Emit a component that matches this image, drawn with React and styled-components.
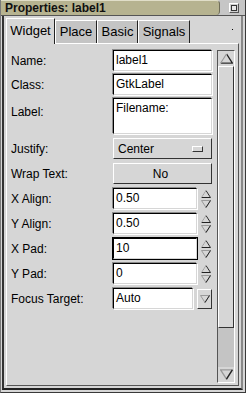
import styled, { createGlobalStyle } from "styled-components";

const Global = createGlobalStyle`
  html, body {
    margin: 0;
    padding: 0;
    background: #d6d6d6;
  }
  body {
    font-family: "Liberation Sans", Arial, sans-serif;
    font-size: 12px;
    color: #000;
  }
`;

const Window = styled.div`
  width: 246px;
  height: 393px;
  box-sizing: border-box;
  background: #d6d6d6;
  border-left: 1px solid #7a7a7a;
  border-right: 1px solid #3a3a3a;
  border-bottom: 1px solid #3a3a3a;
  display: flex;
  flex-direction: column;
  overflow: hidden;
`;

const TitleBar = styled.div`
  height: 15px;
  display: flex;
  align-items: stretch;
  border-bottom: 1px solid #555;
  background: #c6c6c6;
`;

const TitleText = styled.div`
  width: 219px;
  background: #b6b390;
  border-top: 1px solid #e0dec8;
  border-right: 1px solid #6e6c58;
  border-bottom-right-radius: 4px;
  border-top-right-radius: 4px;
  box-sizing: border-box;
  padding-left: 4px;
  font-weight: bold;
  font-size: 12px;
  line-height: 14px;
  color: #101010;
`;

const CloseBox = styled.div`
  margin: 3px 0 0 9px;
  width: 10px;
  height: 10px;
  box-sizing: border-box;
  border: 1px solid;
  border-color: #fff #555 #555 #fff;
  background: #cfcfcf;
  display: flex;
  align-items: center;
  justify-content: center;

  &::after {
    content: "";
    width: 4px;
    height: 4px;
    border: 1px solid #333;
    background: #e8e8e8;
  }
`;

const Frame = styled.div`
  flex: 1;
  display: flex;
  flex-direction: column;
  margin: 0 2px 2px 1px;
  border-left: 2px solid #333;
  border-right: 2px solid #888;
  border-bottom: 2px solid #222;
  padding: 1px 2px 2px 2px;
`;

const TabRow = styled.div`
  height: 26px;
  display: flex;
  align-items: flex-end;
  position: relative;
`;

const Tab = styled.div`
  box-sizing: border-box;
  width: ${(p) => p.$w}px;
  height: ${(p) => (p.$active ? "26px" : "23px")};
  padding-top: ${(p) => (p.$active ? "4px" : "3px")};
  text-align: center;
  background: ${(p) => (p.$active ? "#d6d6d6" : "#c4c4c4")};
  border-top: 1px solid #fff;
  border-left: 1px solid #fff;
  border-right: 1px solid #222;
  font-size: 13px;
  line-height: 16px;
  position: relative;
  z-index: ${(p) => (p.$active ? 2 : 1)};
  margin-bottom: ${(p) => (p.$active ? "-1px" : "0")};
`;

const Dot = styled.span`
  position: absolute;
  right: 6px;
  top: 12px;
  width: 1px;
  height: 1px;
  background: #000;
`;

const Page = styled.div`
  flex: 1;
  display: flex;
  border-top: 1px solid #fff;
  border-left: 1px solid #fff;
  border-right: 1px solid #555;
  border-bottom: 1px solid #555;
  padding: 6px 3px 2px 4px;
`;

const Form = styled.div`
  flex: 1;
  display: flex;
  flex-direction: column;
  gap: 3px;
  padding-right: 5px;
`;

const Row = styled.div`
  display: grid;
  grid-template-columns: 102px 1fr;
  align-items: ${(p) => (p.$top ? "start" : "center")};
  min-height: 21px;
  margin-top: ${(p) => p.$mt || 0}px;
`;

const Label = styled.div`
  font-size: 12px;
  padding-top: ${(p) => (p.$top ? "7px" : "0")};
`;

const Entry = styled.div`
  box-sizing: border-box;
  height: ${(p) => p.$h || 21}px;
  background: #fff;
  border: 1px solid;
  border-color: #000 #d6d6d6 #d6d6d6 #000;
  box-shadow: -1px -1px 0 #8c8c8c, 1px 1px 0 #fff;
  padding: 2px 2px;
  font-size: 12px;
  line-height: 15px;
  ${(p) => p.$focus && "outline: 1px solid #000; box-shadow: none;"}
`;

const Button = styled.div`
  box-sizing: border-box;
  height: 21px;
  background: #d6d6d6;
  border: 1px solid;
  border-color: #fff #333 #333 #fff;
  display: flex;
  align-items: center;
  justify-content: ${(p) => (p.$center ? "center" : "space-between")};
  padding: 0 8px 0 4px;
  font-size: 12px;
`;

const OptionMark = styled.span`
  width: 9px;
  height: 4px;
  border: 1px solid;
  border-color: #fff #333 #333 #fff;
  background: #d6d6d6;
`;

const SpinWrap = styled.div`
  display: flex;
  align-items: center;
  gap: 2px;
`;

const SpinEntry = styled(Entry)`
  flex: 1;
`;

const Arrows = styled.div`
  width: 13px;
  display: flex;
  flex-direction: column;
  align-items: center;
  gap: 2px;
`;

const ComboButton = styled.div`
  box-sizing: border-box;
  width: 15px;
  height: 20px;
  margin-left: 2px;
  border: 1px solid;
  border-color: #fff #333 #333 #fff;
  display: flex;
  align-items: center;
  justify-content: center;
`;

const Scrollbar = styled.div`
  width: 16px;
  display: flex;
  flex-direction: column;
  background: #c4c4c4;
  border: 1px solid;
  border-color: #555 #fff #fff #555;
`;

const ArrowCell = styled.div`
  height: 15px;
  display: flex;
  align-items: center;
  justify-content: center;
  background: #d6d6d6;
`;

const Thumb = styled.div`
  height: 262px;
  box-sizing: border-box;
  background: #d6d6d6;
  border: 1px solid;
  border-color: #fff #333 #333 #fff;
`;

const Trough = styled.div`
  flex: 1;
`;

const Up = ({ w = 10, h = 8 }) => (
  <svg width={w} height={h} viewBox="0 0 10 8">
    <path d="M5 0.5 L0.5 7.5 H9.5 Z" fill="#d6d6d6" stroke="#fff" strokeWidth="1" />
    <path d="M5 0.5 L9.5 7.5 H0.5" fill="none" stroke="#222" strokeWidth="1" />
    <path d="M5 0.5 L0.5 7.5" fill="none" stroke="#999" strokeWidth="1" />
  </svg>
);

const Down = ({ w = 10, h = 8 }) => (
  <svg width={w} height={h} viewBox="0 0 10 8">
    <path d="M0.5 0.5 H9.5 L5 7.5 Z" fill="#d6d6d6" stroke="#999" strokeWidth="1" />
    <path d="M9.5 0.5 L5 7.5" fill="none" stroke="#222" strokeWidth="1" />
  </svg>
);

const Spin = ({ value, focus }) => (
  <SpinWrap>
    <SpinEntry $focus={focus}>{value}</SpinEntry>
    <Arrows>
      <Up />
      <Down />
    </Arrows>
  </SpinWrap>
);

export default function App() {
  return (
    <>
      <Global />
      <Window>
        <TitleBar>
          <TitleText>Properties: label1</TitleText>
          <CloseBox />
        </TitleBar>
        <Frame>
          <TabRow>
            <Tab $active $w={49}>Widget</Tab>
            <Tab $w={42}>Place</Tab>
            <Tab $w={41}>Basic</Tab>
            <Tab $w={52}>Signals</Tab>
            <Dot />
          </TabRow>
          <Page>
            <Form>
              <Row>
                <Label>Name:</Label>
                <Entry>label1</Entry>
              </Row>
              <Row>
                <Label>Class:</Label>
                <Entry>GtkLabel</Entry>
              </Row>
              <Row $top>
                <Label $top>Label:</Label>
                <Entry $h={36}>Filename:</Entry>
              </Row>
              <Row $mt={1}>
                <Label>Justify:</Label>
                <Button>
                  Center
                  <OptionMark />
                </Button>
              </Row>
              <Row $mt={1}>
                <Label>Wrap Text:</Label>
                <Button $center>No</Button>
              </Row>
              <Row $mt={1}>
                <Label>X Align:</Label>
                <Spin value="0.50" />
              </Row>
              <Row $mt={1}>
                <Label>Y Align:</Label>
                <Spin value="0.50" />
              </Row>
              <Row $mt={1}>
                <Label>X Pad:</Label>
                <Spin value="10" focus />
              </Row>
              <Row $mt={1}>
                <Label>Y Pad:</Label>
                <Spin value="0" />
              </Row>
              <Row $mt={1}>
                <Label>Focus Target:</Label>
                <SpinWrap>
                  <SpinEntry>Auto</SpinEntry>
                  <ComboButton>
                    <Down />
                  </ComboButton>
                </SpinWrap>
              </Row>
            </Form>
            <Scrollbar>
              <ArrowCell>
                <Up w={13} h={11} />
              </ArrowCell>
              <Thumb />
              <Trough />
              <ArrowCell>
                <Down w={13} h={11} />
              </ArrowCell>
            </Scrollbar>
          </Page>
        </Frame>
      </Window>
    </>
  );
}
